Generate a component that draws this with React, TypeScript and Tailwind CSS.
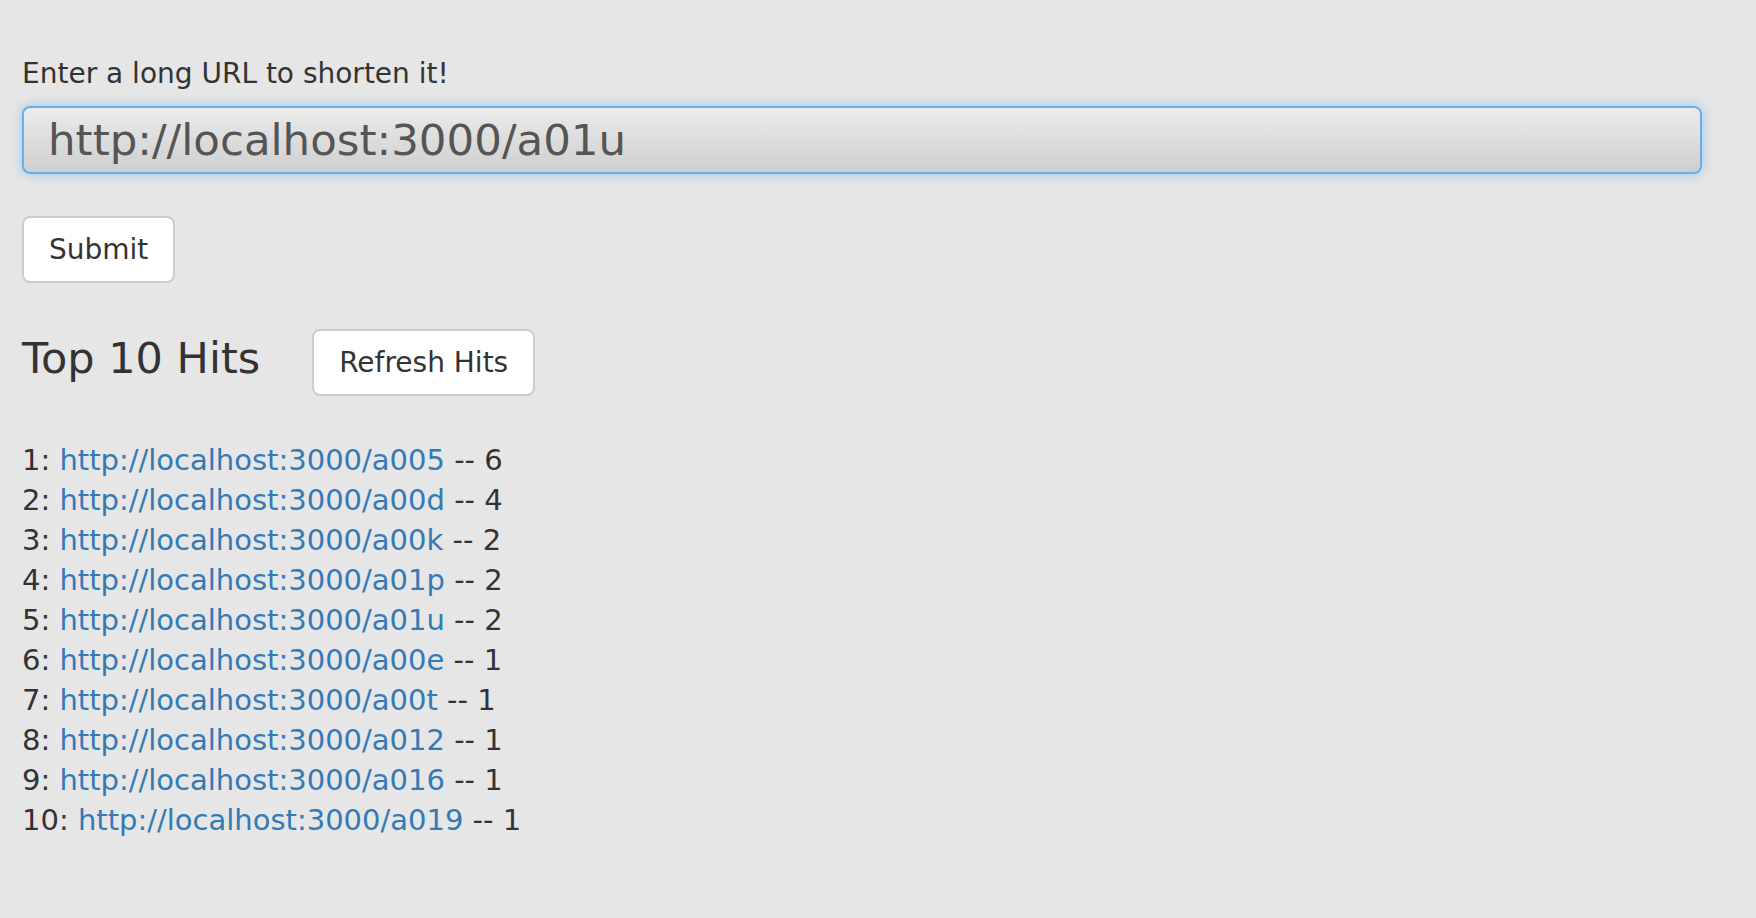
import React, { useState } from 'react';

type THit = {
  url: string;
  count: number;
};

const hits: THit[] = [
  { url: 'http://localhost:3000/a005', count: 6 },
  { url: 'http://localhost:3000/a00d', count: 4 },
  { url: 'http://localhost:3000/a00k', count: 2 },
  { url: 'http://localhost:3000/a01p', count: 2 },
  { url: 'http://localhost:3000/a01u', count: 2 },
  { url: 'http://localhost:3000/a00e', count: 1 },
  { url: 'http://localhost:3000/a00t', count: 1 },
  { url: 'http://localhost:3000/a012', count: 1 },
  { url: 'http://localhost:3000/a016', count: 1 },
  { url: 'http://localhost:3000/a019', count: 1 },
];

function App() {
  const [url, setUrl] = useState('http://localhost:3000/a01u');

  return (
    <div
      className="min-h-screen bg-[#e6e6e6] text-[#333] px-[22px] pt-[54px] text-[28px] leading-[40px]"
      style={{ fontFamily: '"DejaVu Sans", Verdana, sans-serif' }}
    >
      <form onSubmit={(e) => e.preventDefault()}>
        <label className="block mb-[12px]">Enter a long URL to shorten it!</label>
        <input
          value={url}
          onChange={(e) => setUrl(e.target.value)}
          className="block w-[1680px] h-[68px] px-[24px] text-[43.5px] text-[#555] rounded-[8px] border-2 border-[#66afe9] bg-gradient-to-b from-[#ebebeb] to-[#cfcfcf] outline-none shadow-[0_0_12px_rgba(102,175,233,0.6)]"
        />
        <button
          type="submit"
          className="mt-[42px] h-[67px] px-[25px] bg-white border-2 border-[#ccc] rounded-[8px]"
        >
          Submit
        </button>
      </form>
      <div className="flex items-center gap-[52px] mt-[46px]">
        <h3 className="text-[43px] leading-[56px] mb-[9px]">Top 10 Hits</h3>
        <button className="h-[67px] px-[25px] bg-white border-2 border-[#ccc] rounded-[8px]">
          Refresh Hits
        </button>
      </div>
      <ul className="mt-[44px] text-[29px]">
        {hits.map((hit, i) => (
          <li key={hit.url}>
            {i + 1}:{' '}
            <a href="#" className="text-[#337ab7]">
              {hit.url}
            </a>{' '}
            -- {hit.count}
          </li>
        ))}
      </ul>
    </div>
  );
}

export default App;
